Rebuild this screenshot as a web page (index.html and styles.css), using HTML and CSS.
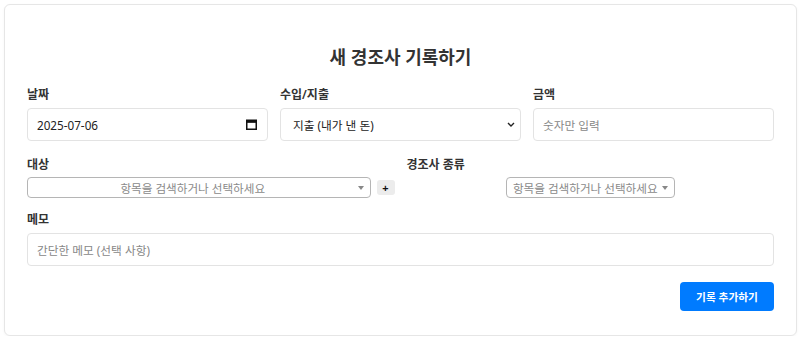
FILE: index.html
```html
<!DOCTYPE html>
<html lang="ko">
<head>
<meta charset="utf-8">
<link rel="stylesheet" href="styles.css">
</head>
<body>
<div class="card">
  <h2 class="title">새 경조사 기록하기</h2>
  <div class="row row-3 row-first">
    <div class="field">
      <label class="label">날짜</label>
      <div class="wrap">
        <input class="control" type="text" value="2025-07-06">
        <svg class="cal-icon" width="11" height="11" viewBox="0 0 11 11" aria-hidden="true">
          <rect x="0.75" y="1.25" width="9.5" height="9" fill="none" stroke="#111" stroke-width="1.5"/>
          <rect x="0.75" y="1.25" width="9.5" height="2.6" fill="#111"/>
        </svg>
      </div>
    </div>
    <div class="field">
      <label class="label">수입/지출</label>
      <div class="wrap">
        <select class="control select">
          <option>지출 (내가 낸 돈)</option>
          <option>수입 (내가 받은 돈)</option>
        </select>
        <svg class="chev" width="8" height="5" viewBox="0 0 8 5" aria-hidden="true">
          <polyline points="1,1 4,4 7,1" fill="none" stroke="#222" stroke-width="1.4"/>
        </svg>
      </div>
    </div>
    <div class="field">
      <label class="label">금액</label>
      <input class="control" type="text" placeholder="숫자만 입력">
    </div>
  </div>
  <div class="row row-2">
    <div class="field">
      <label class="label label-s2">대상</label>
      <div class="s2-line">
        <div class="s2 s2-full">
          <span class="s2-text">항목을 검색하거나 선택하세요</span>
          <span class="s2-arrow"></span>
        </div>
        <button class="plus">+</button>
      </div>
    </div>
    <div class="field">
      <label class="label label-s2">경조사 종류</label>
      <div class="s2-center">
        <div class="s2 s2-auto">
          <span class="s2-text">항목을 검색하거나 선택하세요</span>
          <span class="s2-arrow"></span>
        </div>
      </div>
    </div>
  </div>
  <div class="row">
    <div class="field">
      <label class="label label-memo">메모</label>
      <input class="control" type="text" placeholder="간단한 메모 (선택 사항)">
    </div>
  </div>
  <div class="actions">
    <button class="submit">기록 추가하기</button>
  </div>
</div>
</body>
</html>
```

FILE: styles.css
```css
html, body {
  margin: 0;
  padding: 0;
  background: #ffffff;
}
body {
  padding: 4px 3px 0 4px;
  font-family: "Noto Sans", "Noto Sans CJK KR", sans-serif;
  color: #333;
}
.card {
  border: 1px solid #e6e6e6;
  border-radius: 6px;
  padding: 16px 22px 24px 22px;
  box-shadow: 0 1px 3px rgba(0,0,0,0.04);
  background: #fff;
}
.title {
  margin: 0 0 16px 0;
  text-align: center;
  font-size: 18px;
  line-height: 26px;
  font-weight: 700;
  color: #333;
  padding-top: 23px;
}
.row {
  display: grid;
  gap: 12px;
  margin-bottom: 13px;
}
.row-first { margin-bottom: 15px; }
.row-3 { grid-template-columns: 1fr 1fr 1fr; }
.row-2 { grid-template-columns: 1fr 1fr; }
.field {
  display: flex;
  flex-direction: column;
  min-width: 0;
}
.label {
  font-size: 12px;
  line-height: 18px;
  font-weight: 600;
  color: #333;
  margin-bottom: 4px;
}
.label-s2 { margin-bottom: 3px; }
.label-memo { margin-bottom: 4px; }
.wrap {
  position: relative;
}
.control {
  box-sizing: border-box;
  height: 33px;
  width: 100%;
  border: 1px solid #e3e3e3;
  border-radius: 4px;
  background: #fff;
  padding: 0 9px;
  font-family: "Noto Sans", "Noto Sans CJK KR", sans-serif;
  font-size: 11.7px;
  color: #222;
  outline: none;
}
.control::placeholder { color: #888; }
.select {
  appearance: none;
  -webkit-appearance: none;
  padding-left: 12px;
}
.cal-icon {
  position: absolute;
  right: 11px;
  top: 11px;
}
.chev {
  position: absolute;
  right: 6px;
  top: 14px;
}
.s2-line {
  display: flex;
  align-items: center;
  gap: 6px;
}
.s2 {
  box-sizing: border-box;
  height: 21px;
  border: 1px solid #b5b5b5;
  border-radius: 4px;
  background: #fff;
  display: flex;
  align-items: center;
  position: relative;
  font-size: 11.6px;
  color: #8a8a8a;
}
.s2-full {
  flex: 1;
  justify-content: center;
  padding: 0 20px 0 8px;
}
.s2-center {
  display: flex;
  justify-content: center;
}
.s2-auto {
  padding: 0 16px 0 6px;
}
.s2-text { white-space: nowrap; }
.s2-arrow {
  position: absolute;
  right: 6px;
  top: 8px;
  width: 0;
  height: 0;
  border-left: 3px solid transparent;
  border-right: 3px solid transparent;
  border-top: 4px solid #888;
}
.plus {
  width: 18px;
  height: 15px;
  border: none;
  border-radius: 3px;
  background: #ececec;
  padding: 0;
  font-size: 11px;
  font-weight: 700;
  line-height: 15px;
  color: #111;
  font-family: "Noto Sans", sans-serif;
}
.actions {
  display: flex;
  justify-content: flex-end;
  padding-top: 3px;
}
.submit {
  width: 94px;
  height: 29px;
  border: none;
  border-radius: 4px;
  background: #007bff;
  color: #fff;
  font-family: "Noto Sans", "Noto Sans CJK KR", sans-serif;
  font-size: 10.7px;
  font-weight: 700;
  padding: 0;
}
```
